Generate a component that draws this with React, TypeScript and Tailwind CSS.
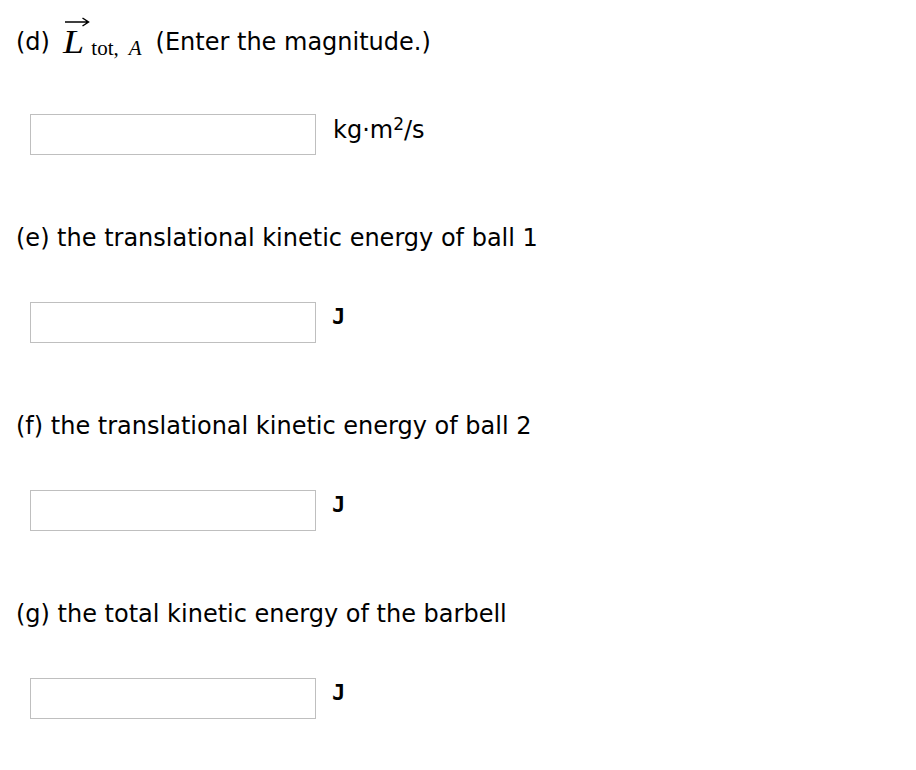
import React from "react";

const Field = ({ unit, mono, gapTop }: { unit: React.ReactNode; mono?: boolean; gapTop: string }) => (
  <div className={`flex items-start pl-[30px] ${gapTop}`}>
    <input type="text" aria-label="answer" className="w-[286px] h-[41px] border border-[#bfbfbf] bg-white outline-none" />
    {mono ? (
      <span className="ml-[16px] mt-[1px] text-[22px] leading-[28px] font-bold font-['DejaVu_Sans_Mono',monospace]">{unit}</span>
    ) : (
      <span className="ml-[17px] mt-[1px] text-[24px] leading-[30px]">{unit}</span>
    )}
  </div>
);

const Label = ({ children }: { children: React.ReactNode }) => (
  <div className="h-[36px] pl-[16px] text-[24px] leading-[36px] whitespace-nowrap">{children}</div>
);

export default function App() {
  return (
    <div className="w-[916px] h-[770px] bg-white font-['DejaVu_Sans',Verdana,sans-serif] text-black pt-[24px]">
      <Label>
        <span>(d)</span>
        <span className="relative inline-block ml-[13px] font-['Liberation_Serif',serif] italic text-[33px] leading-none align-[-3px]">
          <span className="inline-block scale-x-[1.15] origin-left">L</span>
          <svg className="absolute left-[1px] top-[-9px]" width="26" height="10" viewBox="0 0 26 10">
            <path d="M1 5 H24 M18.5 1 L24.5 5 L18.5 9" stroke="black" strokeWidth="1.5" fill="none" />
          </svg>
        </span>
        <span className="ml-[10px] font-['Liberation_Serif',serif] text-[21px] align-[-5px]">
          tot,<span className="ml-[10px] italic">A</span>
        </span>
        <span className="ml-[14px]">(Enter the magnitude.)</span>
      </Label>
      <Field
        gapTop="mt-[54px]"
        unit={
          <span>
            kg·m<span className="text-[17px] leading-none align-[8px]">2</span>/s
          </span>
        }
      />
      <div className="mt-[65px]">
        <Label>(e) the translational kinetic energy of ball 1</Label>
      </div>
      <Field gapTop="mt-[46px]" unit="J" mono />
      <div className="mt-[65px]">
        <Label>(f) the translational kinetic energy of ball 2</Label>
      </div>
      <Field gapTop="mt-[46px]" unit="J" mono />
      <div className="mt-[65px]">
        <Label>(g) the total kinetic energy of the barbell</Label>
      </div>
      <Field gapTop="mt-[46px]" unit="J" mono />
    </div>
  );
}
